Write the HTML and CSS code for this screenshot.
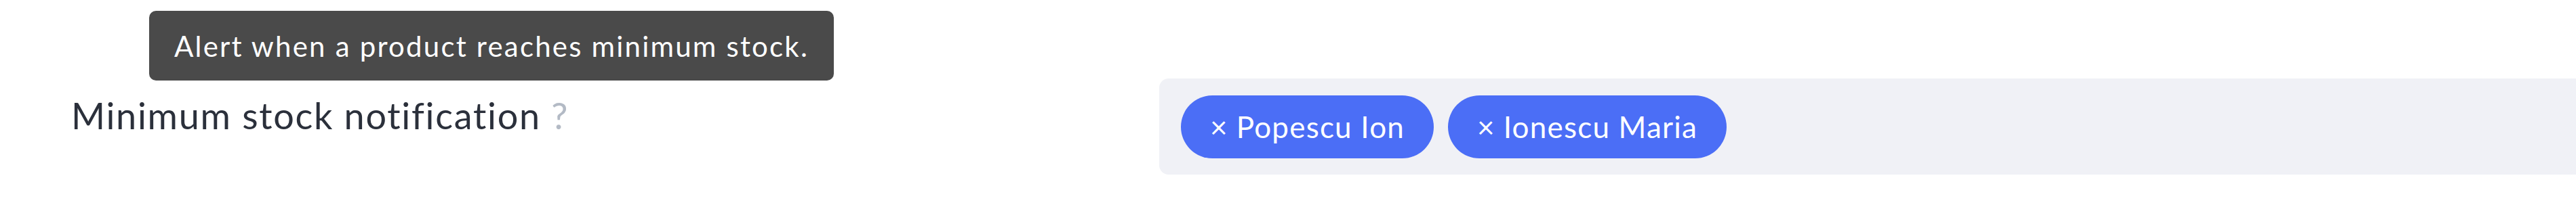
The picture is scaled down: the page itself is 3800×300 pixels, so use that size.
FILE: index.html
```html
<!DOCTYPE html>
<html lang="en">
<head>
  <meta charset="UTF-8">
  <meta name="viewport" content="width=device-width, initial-scale=1.0">
  <title>Minimum stock notification</title>
  <link rel="stylesheet" href="styles.css">
</head>
<body>

  <div class="form-row">
    <div class="tooltip">Alert when a product reaches minimum stock.</div>

    <div class="form-label">
      Minimum stock notification <span class="help">?</span>
    </div>

    <div class="tag-field">
      <span class="tag"><span class="tag-remove">×</span> Popescu Ion</span>
      <span class="tag"><span class="tag-remove">×</span> Ionescu Maria</span>
    </div>
  </div>

</body>
</html>
```

FILE: styles.css
```css
body {
  font-family: 'Lato', 'Open Sans', sans-serif;
  font-variant-ligatures: none;
  background-color: #fff;
  margin: 0;
  overflow: hidden;
}

.form-row {
  position: relative;
  display: flex;
  align-items: flex-start;
  padding: 116px 0 0 105px;
}

.tooltip {
  position: absolute;
  top: 16px;
  left: 220px;
  height: 103px;
  display: flex;
  align-items: center;
  padding: 0 37px;
  background-color: #4a4a4a;
  color: #fff;
  font-size: 42px;
  letter-spacing: 2.2px;
  border-radius: 10px;
  white-space: nowrap;
}

.form-label {
  width: 1605px;
  margin-top: 23px;
  font-size: 54px;
  line-height: 64px;
  letter-spacing: 1.7px;
  color: #2b303b;
}

.help {
  color: #b3bac5;
}

.tag-field {
  flex: 1;
  margin-right: -20px;
  display: flex;
  align-items: center;
  gap: 21px;
  height: 142px;
  padding-left: 32px;
  background-color: #f0f1f6;
  border-radius: 14px 0 0 14px;
}

.tag {
  display: inline-flex;
  align-items: center;
  height: 93px;
  padding: 0 43px;
  background-color: #4b6ef6;
  color: #fff;
  font-size: 44px;
  letter-spacing: 1.2px;
  border-radius: 47px;
  white-space: nowrap;
}

.tag-remove {
  margin-right: 12px;
}
```
